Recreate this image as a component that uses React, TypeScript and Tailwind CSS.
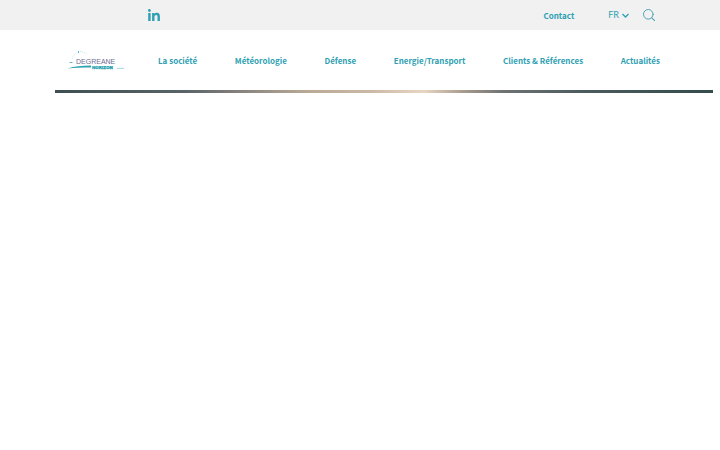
const links = [
  { label: "La société", href: "#societe" },
  { label: "Météorologie", href: "#meteorologie" },
  { label: "Défense", href: "#defense" },
  { label: "Energie/Transport", href: "#energie-transport" },
  { label: "Clients & Références", href: "#clients" },
  { label: "Actualités", href: "#actualites" },
];

function LinkedinIcon() {
  return (
    <svg viewBox="0 0 12 12" className="size-3" fill="#2f9fb3" aria-hidden="true">
      <circle cx="1.4" cy="1.5" r="1.4" />
      <path d="M.2 4h2.4v8H.2zM4.1 4h2.3v1.1C6.8 4.3 7.7 3.8 8.8 3.8c2.4 0 3.1 1.5 3.1 3.7V12H9.5V8c0-1.2-.1-2.1-1.4-2.1S6.5 6.9 6.5 8v4H4.1z" />
    </svg>
  );
}

function SearchIcon() {
  return (
    <svg viewBox="0 0 12 12" className="size-3" fill="none" stroke="#4fa3b5" strokeLinecap="round" aria-hidden="true">
      <circle cx="5.3" cy="5.3" r="4.8" />
      <path d="M8.8 8.8l2.8 2.8" strokeWidth="1.1" />
    </svg>
  );
}

function Logo() {
  return (
    <svg viewBox="0 0 56 20" className="h-5 w-14" role="img" aria-label="Degreane Horizon">
      <path d="M4.5 8.5C5.5 5 7.5 3 9.5 2.2M12 1.6c2.6 0 4.6.8 6.4 2.6" fill="none" stroke="#8fcbd6" strokeWidth="0.5" strokeDasharray="1 1" />
      <path d="M10.5 1v2.2M1.5 12.5h3" stroke="#56aebf" strokeWidth="0.9" />
      <text x="8" y="14" fontSize="7" fill="#6d6b92" fontFamily="Liberation Sans, sans-serif">
        DEGREANE
      </text>
      <path d="M0 18.4C6 16.4 14 15.7 23 15.6V17.4C14 17.4 6 17.7 0 18.4z" fill="#2ba4b4" />
      <path d="M49 18.4h7" stroke="#8fcbd6" strokeWidth="0.8" />
      <text x="24" y="19" fontSize="4" fontWeight="700" fill="#219daf" stroke="#219daf" strokeWidth="0.3" fontFamily="DejaVu Sans, sans-serif">
        HORIZON
      </text>
    </svg>
  );
}

export default function App() {
  return (
    <header className="w-full bg-white font-['Noto_Sans_CJK_SC',sans-serif] text-[8px] leading-3 text-[#2f9fb3]">
      <div className="flex h-[30px] items-center justify-between bg-[#f1f1f1] pr-[65px] pl-37">
        <a href="#linkedin" aria-label="LinkedIn">
          <LinkedinIcon />
        </a>
        <div className="flex items-center">
          <a href="#contact" className="mr-[34px] pt-px font-bold">
            Contact
          </a>
          <button type="button" aria-label="Langue : FR" className="mr-3.5 flex items-center gap-[3px]">
            <span className="font-['Lato',sans-serif] text-[9px]">FR</span>
            <svg viewBox="0 0 7 5" className="h-[5px] w-[7px]" fill="none" stroke="#2f9fb3" strokeWidth="1.3" aria-hidden="true">
              <path d="M.5 1l3 3 3-3" />
            </svg>
          </button>
          <button type="button" aria-label="Rechercher">
            <SearchIcon />
          </button>
        </div>
      </div>

      <div className="flex h-15 items-center pr-15 pl-17">
        <a href="#accueil" className="mr-[34px] shrink-0">
          <Logo />
        </a>
        <nav className="flex flex-1 justify-between pt-0.5 font-bold whitespace-nowrap">
          {links.map((link) => (
            <a key={link.href} href={link.href}>
              {link.label}
            </a>
          ))}
        </nav>
      </div>

      <div className="mr-[7px] ml-[55px] h-[3px] bg-[linear-gradient(90deg,#3d4f52_0%,#5a6468_20%,#85817c_28%,#b8a995_38%,#cbb9a3_48%,#e8d6c0_56%,#a89c8f_62%,#6f7373_68%,#4c5b5e_80%,#334c4c_100%)]" />
    </header>
  );
}
